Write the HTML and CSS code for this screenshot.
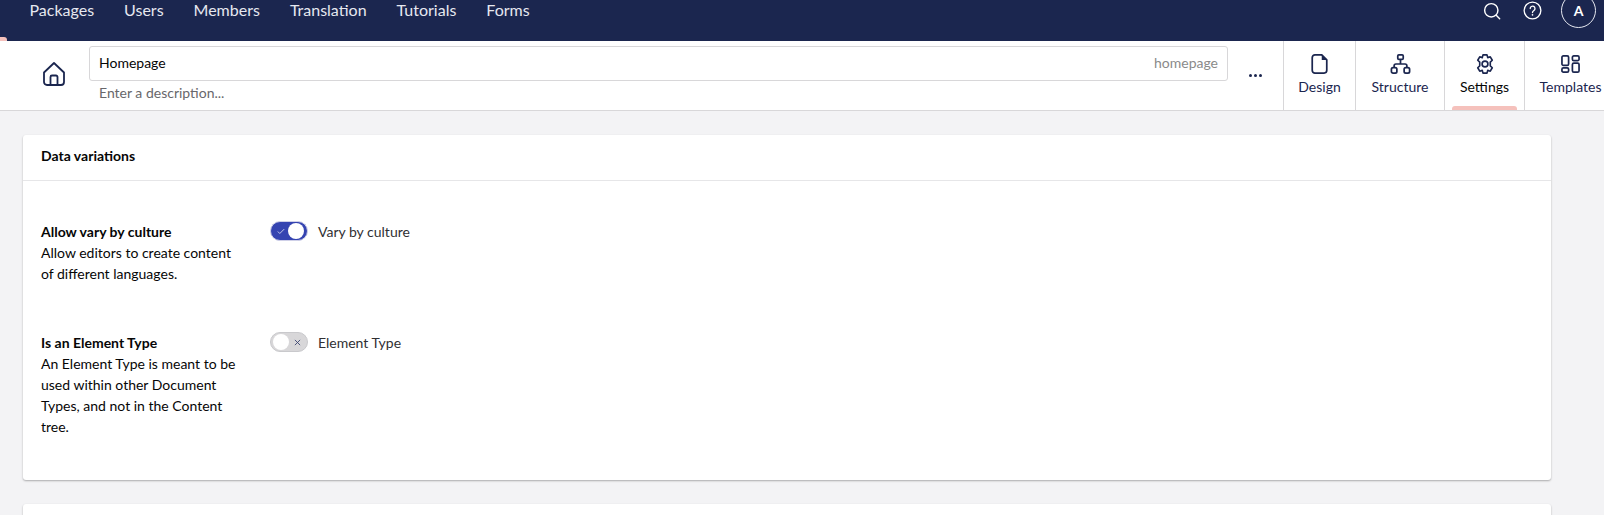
FILE: index.html
```html
<!DOCTYPE html>
<html lang="en">
<head>
  <meta charset="UTF-8">
  <title>Homepage - Settings</title>
  <link rel="stylesheet" href="styles.css">
</head>
<body>
  <header class="topbar">
    <span class="section-mark"></span>
    <nav class="main-nav">
      <a>Packages</a>
      <a>Users</a>
      <a>Members</a>
      <a>Translation</a>
      <a>Tutorials</a>
      <a>Forms</a>
    </nav>
    <div class="top-tools">
      <svg class="search-icon" viewBox="0 0 20 20" width="18" height="18" fill="none">
        <circle cx="9.200" cy="9.200" r="7.400" stroke="#fff" stroke-width="1.600"/>
        <path d="M14.700 14.700L18.500 18.500" stroke="#fff" stroke-width="1.600" stroke-linecap="round"/>
      </svg>
      <svg class="help-icon" viewBox="0 0 20 20" width="19" height="19" fill="none">
        <circle cx="10" cy="10" r="8.800" stroke="#fff" stroke-width="1.400"/>
        <path d="M7.600 7.900a2.500 2.500 0 1 1 3.900 2.100c-.9.6-1.500 1-1.500 2.100" stroke="#fff" stroke-width="1.400" stroke-linecap="round"/>
        <circle cx="10" cy="14.600" r=".9" fill="#fff"/>
      </svg>
      <span class="avatar">A</span>
    </div>
  </header>

  <section class="editor-head">
    <div class="home-icon">
      <svg viewBox="0 0 24 26" width="24" height="26" fill="none">
        <path d="M2 11.500L12 2l10 9.500V21a3 3 0 0 1-3 3H5a3 3 0 0 1-3-3z" stroke="#1b264f" stroke-width="1.800" stroke-linejoin="round"/>
        <path d="M8.500 24v-8a1.500 1.500 0 0 1 1.500-1.500h4a1.500 1.500 0 0 1 1.500 1.500v8" stroke="#1b264f" stroke-width="1.800"/>
      </svg>
    </div>
    <div class="name-fields">
      <div class="name-input">
        <span>Homepage</span>
        <span class="alias">homepage</span>
      </div>
      <div class="description">Enter a description...</div>
    </div>
    <div class="more-dots"><i></i><i></i><i></i></div>
    <div class="tabs">
      <div class="tab tab-design">
        <svg viewBox="0 0 18 22" width="17" height="20" fill="none">
          <path d="M1 4a3 3 0 0 1 3-3h7.500L17 6.500V18a3 3 0 0 1-3 3H4a3 3 0 0 1-3-3z" stroke="#1b264f" stroke-width="1.900" stroke-linejoin="round"/>
          <path d="M11.500 1v5.500H17z" fill="#1b264f"/>
        </svg>
        <span>Design</span>
      </div>
      <div class="tab tab-structure">
        <svg viewBox="0 0 22 22" width="21" height="20" fill="none" stroke="#1b264f" stroke-width="1.900">
          <rect x="8" y="1" width="6" height="5" rx="1.200"/>
          <rect x="1" y="15" width="6" height="6" rx="1.800"/>
          <rect x="15" y="15" width="6" height="6" rx="1.800"/>
          <path d="M11 6v5M4 15v-2a2 2 0 0 1 2-2h10a2 2 0 0 1 2 2v2"/>
        </svg>
        <span>Structure</span>
      </div>
      <div class="tab tab-settings">
        <svg viewBox="3 1 18 22" width="18" height="20" fill="none" stroke="#1b264f" stroke-width="1.800" stroke-linejoin="round">
          <circle cx="12" cy="12" r="3.200"/>
          <path d="M9.800 2h4.400l.8 3 2.800-.9 2.200 3.800-2.200 2.100v4l2.200 2.100-2.200 3.800-2.800-.9-.8 3H9.800l-.8-3-2.800.9-2.200-3.800L6.200 14v-4L4 7.900l2.200-3.800 2.800.9z"/>
        </svg>
        <span>Settings</span>
        <b class="active-mark"></b>
      </div>
      <div class="tab tab-templates">
        <svg viewBox="0 0 20 20" width="19" height="20" fill="none" stroke="#1b264f" stroke-width="1.800">
          <rect x="1" y="1.500" width="7" height="10" rx="1.500"/>
          <rect x="12" y="1.500" width="7" height="5" rx="1.500"/>
          <rect x="1" y="14" width="7" height="4.500" rx="1.500"/>
          <rect x="12" y="9" width="7" height="9.500" rx="1.500"/>
        </svg>
        <span>Templates</span>
      </div>
    </div>
  </section>

  <main class="content">
    <section class="card">
      <h2 class="card-title">Data variations</h2>
      <div class="card-body">
        <div class="prop-row">
          <div class="prop-label">
            <strong>Allow vary by culture</strong>
            <p>Allow editors to create content of different languages.</p>
          </div>
          <div class="prop-value">
            <span class="toggle on">
              <svg viewBox="0 0 10 8" width="8" height="7" fill="none"><path d="M1 4l2.500 2.500L9 1" stroke="#c9cdea" stroke-width="1.200"/></svg>
              <i class="knob"></i>
            </span>
            <span>Vary by culture</span>
          </div>
        </div>
        <div class="prop-row">
          <div class="prop-label">
            <strong>Is an Element Type</strong>
            <p>An Element Type is meant to be used within other Document Types, and not in the Content tree.</p>
          </div>
          <div class="prop-value">
            <span class="toggle">
              <i class="knob"></i>
              <svg viewBox="0 0 8 8" width="7" height="7" fill="none"><path d="M1 1l6 6M7 1l-6 6" stroke="#3a4470" stroke-width="1"/></svg>
            </span>
            <span>Element Type</span>
          </div>
        </div>
      </div>
    </section>
    <section class="card card-next"></section>
  </main>
</body>
</html>
```

FILE: styles.css
```css
* { box-sizing: border-box; }
body {
  margin: 0;
  height: 515px;
  overflow: hidden;
  background: #f3f3f5;
  color: #1b264f;
  font-family: Lato, "Open Sans", Arial, sans-serif;
  font-size: 14px;
}

/* top bar, page is scrolled a bit so its top is cut */
.topbar {
  position: relative;
  display: flex;
  align-items: center;
  justify-content: space-between;
  height: 61px;
  margin-top: -20px;
  padding: 0 8px 0 29.5px;
  background: #1b264f;
}
.section-mark {
  position: absolute;
  left: 0; bottom: 0;
  width: 7px; height: 4px;
  background: #f5c1bc;
  border-radius: 0 3px 0 0;
}
.main-nav { display: flex; gap: 30px; padding-bottom: 2px; }
.main-nav a { color: #e6e8f0; font-size: 16px; }
.top-tools { display: flex; align-items: center; }
.search-icon { margin-right: 22px; }
.help-icon { margin-right: 19px; }
.avatar {
  display: flex; align-items: center; justify-content: center;
  width: 35px; height: 35px;
  border: 1.5px solid #e6e8f0;
  border-radius: 50%;
  color: #fff;
  font-size: 14px;
  font-weight: 700;
}

/* name + tabs */
.editor-head {
  display: flex;
  height: 70px;
  background: #fff;
  border-bottom: 1px solid #d8d7d9;
}
.home-icon {
  display: flex; align-items: center; justify-content: center;
  width: 89px;
  padding: 0 0 4px 19px;
}
.name-fields { width: 1139px; padding-top: 5px; }
.name-input {
  display: flex; justify-content: space-between; align-items: center;
  height: 35px;
  padding: 0 9px 2px;
  border: 1px solid #d8d7d9;
  border-radius: 3px;
  color: #060606;
  font-size: 14px;
}
.alias { color: #8a8a8a; }
.description {
  padding: 3px 10px 0;
  color: #68676b;
  font-size: 14px;
}
.more-dots {
  display: flex; align-items: center; justify-content: center; gap: 2px;
  width: 55px;
}
.more-dots i { width: 3px; height: 3px; border-radius: 50%; background: #1b264f; }
.tabs { display: flex; flex: 1; min-width: 0; }
.tab {
  position: relative;
  display: flex; flex: none; flex-direction: column; align-items: center;
  padding-top: 13px;
  border-left: 1px solid #d8d7d9;
  color: #1b264f;
  font-size: 14px;
}
.tab span { margin-top: 4px; white-space: nowrap; }
.tab-design { width: 72px; }
.tab-structure { width: 89px; }
.tab-settings { width: 80px; color: #060606; }
.tab-templates { width: 92px; }
.active-mark {
  position: absolute;
  left: 7px; right: 7px; bottom: 0;
  height: 4px;
  background: #f5c1bc;
  border-radius: 3px 3px 0 0;
}

/* cards */
.content { padding: 24px 53px 0 23px; }
.card {
  height: 345px;
  background: #fff;
  border-radius: 3px;
  box-shadow: 0 1px 2px rgba(0,0,0,.3);
}
.card-next { margin-top: 24px; }
.card-title {
  height: 46px;
  margin: 0;
  padding: 12px 18px 0;
  border-bottom: 1px solid #e6e6e8;
  color: #060606;
  font-size: 14px;
  font-weight: 700;
}
.card-body { padding: 40px 18px 0; color: #060606; }
.prop-row { display: flex; margin-bottom: 48px; line-height: 21px; }
.prop-label { width: 205px; margin-right: 24px; }
.prop-label strong { display: block; }
.prop-label p { margin: 0; }
.prop-value { display: flex; gap: 10px; color: #303033; }
.toggle {
  display: flex; align-items: center; justify-content: space-between;
  width: 38px; height: 20px;
  padding: 0 3px 0 6px;
  border: 1px solid #cfd0e8;
  border-radius: 10px;
  background: #d8d7d9;
}
.toggle.on { background: #3544b1; }
.toggle:not(.on) { padding: 0 6px 0 2px; border-color: #c9c9cc; }
.knob { width: 16px; height: 16px; border-radius: 50%; background: #fff; }
```
